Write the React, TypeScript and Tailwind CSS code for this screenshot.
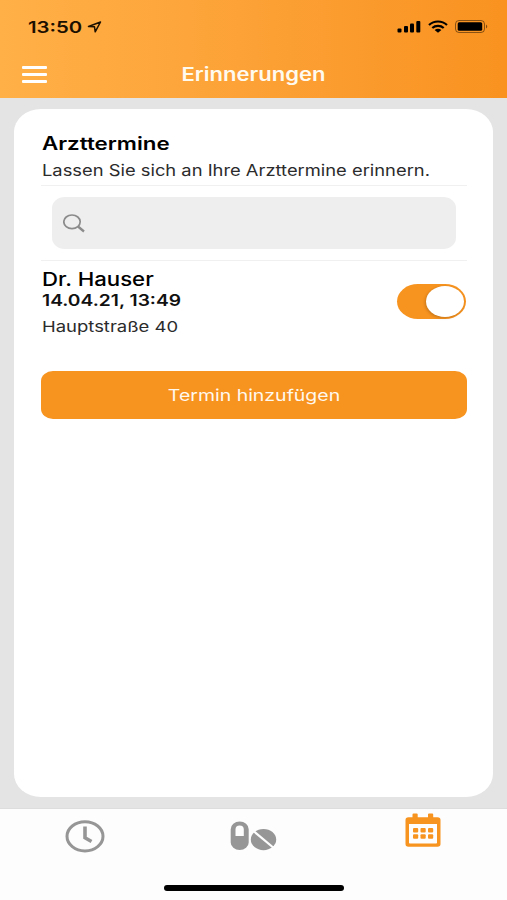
import React, { useState } from 'react';

const SignalIcon: React.FC = () => (
  <svg className="w-[24px] h-[13px]" viewBox="0 0 24 13" fill="#000">
    <rect x="0.5" y="8.5" width="4" height="4" rx="1" />
    <rect x="7" y="6" width="4" height="6.5" rx="1" />
    <rect x="13" y="3.5" width="4" height="9" rx="1" />
    <rect x="19.3" y="1" width="4" height="11.5" rx="1" />
  </svg>
);

const WifiIcon: React.FC = () => (
  <svg className="w-[20px] h-[13px]" viewBox="0 0 20 13" fill="none" stroke="#000" strokeWidth="2.2">
    <path d="M1 5C6 .3 14 .3 19 5" />
    <path d="M4.3 8C7.3 5.2 12.7 5.2 15.7 8" />
    <path d="M6.6 10.1Q10 7.6 13.4 10.1L10 12.8Z" fill="#000" stroke="none" />
  </svg>
);

const BatteryIcon: React.FC = () => (
  <svg className="w-[34px] h-[13px]" viewBox="0 0 34 13">
    <rect x="0.5" y="0.5" width="29" height="12" rx="3.5" fill="none" stroke="#000" strokeOpacity="0.45" />
    <rect x="2.7" y="2.3" width="24.5" height="8.4" rx="1.5" fill="#000" />
    <path d="M31 4.5q2.5 2 0 4z" fill="#000" fillOpacity="0.5" />
  </svg>
);

const ClockIcon: React.FC = () => (
  <svg className="w-[40px] h-[33px]" viewBox="0 0 40 33" fill="none" stroke="#969696">
    <ellipse cx="20" cy="16.3" rx="18" ry="14.6" strokeWidth="3" />
    <path d="M20 6.5V17.8L26.5 21.5" strokeWidth="3.6" />
  </svg>
);

const PillsIcon: React.FC = () => (
  <svg className="w-[48px] h-[31px]" viewBox="0 0 48 31" fill="#969696">
    <path
      fillRule="evenodd"
      d="M.7 8.2a9 7.7 0 0 1 18 0v13.2a9 7.7 0 0 1-18 0zM5.5 15h8.300V8.200a4.150 3.800 0 0 0-8.300 0z"
    />
    <ellipse cx="33.500" cy="18.600" rx="12.700" ry="10.600" />
    <path d="M22.500 9.200L45 28" stroke="#fdfdfd" strokeWidth="2.200" />
  </svg>
);

const CalendarIcon: React.FC = () => (
  <svg className="w-[36px] h-[34px]" viewBox="0 0 36 34" fill="#f7931f">
    <path
      fillRule="evenodd"
      d="M7.500 4.200V1.500q0-1 1-1h3.200q1 0 1 1V4.200H23V1.500q0-1 1-1h3.200q1 0 1 1V4.200H32.500a3 2.800 0 0 1 3 2.800V31a3 2.700 0 0 1-3 2.700H3.500a3 2.700 0 0 1-3-2.700V7a3 2.800 0 0 1 3-2.800zM4 11V29.800q0 .8.8.8H31.200q.8 0 .8-.8V11z"
    />
    <rect x="8" y="15" width="5.200" height="4.500" rx="1" />
    <rect x="15.500" y="15" width="5.200" height="4.500" rx="1" />
    <rect x="23" y="15" width="5.200" height="4.500" rx="1" />
    <rect x="8" y="21.300" width="5.200" height="4.500" rx="1" />
    <rect x="15.500" y="21.300" width="5.200" height="4.500" rx="1" />
    <rect x="23" y="21.300" width="5.200" height="4.500" rx="1" />
  </svg>
);

const App: React.FC = () => {
  const [enabled, setEnabled] = useState(true);

  return (
    <div className="w-full h-[900px] flex flex-col bg-[#e4e4e4] font-['Inter',sans-serif] text-[#111] whitespace-nowrap overflow-hidden">
      {/* Header */}
      <header className="h-[98px] shrink-0 bg-gradient-to-r from-[#ffb047] to-[#f9921f]">
        <div className="h-[53px] flex items-center justify-between pl-[28px] pr-[18px]">
          <div className="flex items-center">
            <div className="w-[59px]">
              <span className="inline-block origin-left scale-x-[1.27] text-[16px] font-semibold text-[#1c1000]">13:50</span>
            </div>
            <svg className="w-[15px] h-[12px]" viewBox="0 0 15 12" fill="none" stroke="#1c1000" strokeWidth="1.500" strokeLinejoin="round">
              <path d="M1.500 5.500L13.500 1L8.200 10.800L7.500 5.800Z" />
            </svg>
          </div>
          <div className="flex items-center">
            <SignalIcon />
            <div className="w-[7px]" />
            <WifiIcon />
            <div className="w-[7px]" />
            <BatteryIcon />
          </div>
        </div>
        <div className="h-[43px] grid grid-cols-[1fr_auto_1fr] items-center pl-[22px] pr-[22px]">
          <button className="w-[25px] flex flex-col gap-[4px]" aria-label="Menü">
            <span className="h-[3px] bg-white rounded-[1px]"></span>
            <span className="h-[3px] bg-white rounded-[1px]"></span>
            <span className="h-[3px] bg-white rounded-[1px]"></span>
          </button>
          <h1 className="scale-x-[1.19] text-[18.500px] leading-none font-semibold text-[#fffaf0]">Erinnerungen</h1>
        </div>
      </header>

      {/* Card */}
      <main className="h-[688px] shrink-0 mt-[11px] mx-[14px] pl-[27px] pr-[26px] bg-white rounded-[27px/23px]">
        <div className="h-[77px] pt-[23px] pl-[1px] border-b border-[#f0f0f0] flex flex-col items-start">
          <h2 className="origin-left scale-x-[1.24] text-[18px] leading-[23px] font-semibold text-black">Arzttermine</h2>
          <p className="mt-[5px] origin-left scale-x-[1.183] text-[15.500px] leading-[22px] text-[#2b2b2b]">Lassen Sie sich an Ihre Arzttermine erinnern.</p>
        </div>
        <div className="h-[75px] px-[11px] pt-[11px] border-b border-[#f0f0f0]">
          <div className="h-[52px] flex items-center pl-[11px] bg-[#eeeeee] rounded-[13px/11px]">
            <svg className="w-[23px] h-[19px]" viewBox="0 0 23 19" fill="none" stroke="#8b8b8b">
              <ellipse cx="9" cy="7.800" rx="8.200" ry="6.800" strokeWidth="1.700" />
              <path d="M15 12.500L21 17.500" strokeWidth="2.300" />
            </svg>
          </div>
        </div>
        <div className="h-[110px] pr-[1px] flex justify-between">
          <div className="pt-[6px] pl-[1px] flex flex-col items-start">
            <h3 className="origin-left scale-x-[1.2] text-[18.500px] leading-[24px] font-medium text-black">Dr. Hauser</h3>
            <p className="origin-left scale-x-[1.24] text-[15.500px] leading-[20px] font-semibold">14.04.21, 13:49</p>
            <p className="mt-[5px] origin-left scale-x-[1.23] text-[15px] leading-[22px] text-[#2b2b2b]">Hauptstraße 40</p>
          </div>
          <button
            onClick={() => setEnabled(!enabled)}
            className={`w-[69px] h-[35px] mt-[23px] p-[2px] flex items-center rounded-[21px/17.5px] ${enabled ? 'bg-[#f7931f] justify-end' : 'bg-[#dddddd] justify-start'}`}
            role="switch"
            aria-checked={enabled}
          >
            <span className="w-[38px] h-[31px] bg-white rounded-[50%] shadow-[-1px_1px_3px_rgba(0,0,0,0.2)]"></span>
          </button>
        </div>
        <button className="w-full h-[48px] flex items-center justify-center bg-[#f7931f] rounded-[12px/10px]">
          <span className="scale-x-[1.18] text-[16.500px] text-[#fff8ee]">Termin hinzufügen</span>
        </button>
      </main>

      {/* Bottom navigation */}
      <nav className="h-[92px] shrink-0 mt-[11px] border-t border-[#dddddd] bg-[#fdfdfd] flex flex-col items-center">
        <div className="w-full h-[76px] grid grid-cols-3">
          <button className="flex justify-center items-start pt-[11px]" aria-label="Uhr"><ClockIcon /></button>
          <button className="flex justify-center items-start pt-[12px]" aria-label="Medikamente"><PillsIcon /></button>
          <button className="flex justify-center items-start pt-[4px]" aria-label="Termine"><CalendarIcon /></button>
        </div>
        <div className="w-[180px] h-[6px] ml-[1px] bg-black rounded-full"></div>
      </nav>
    </div>
  );
};

export default App;
